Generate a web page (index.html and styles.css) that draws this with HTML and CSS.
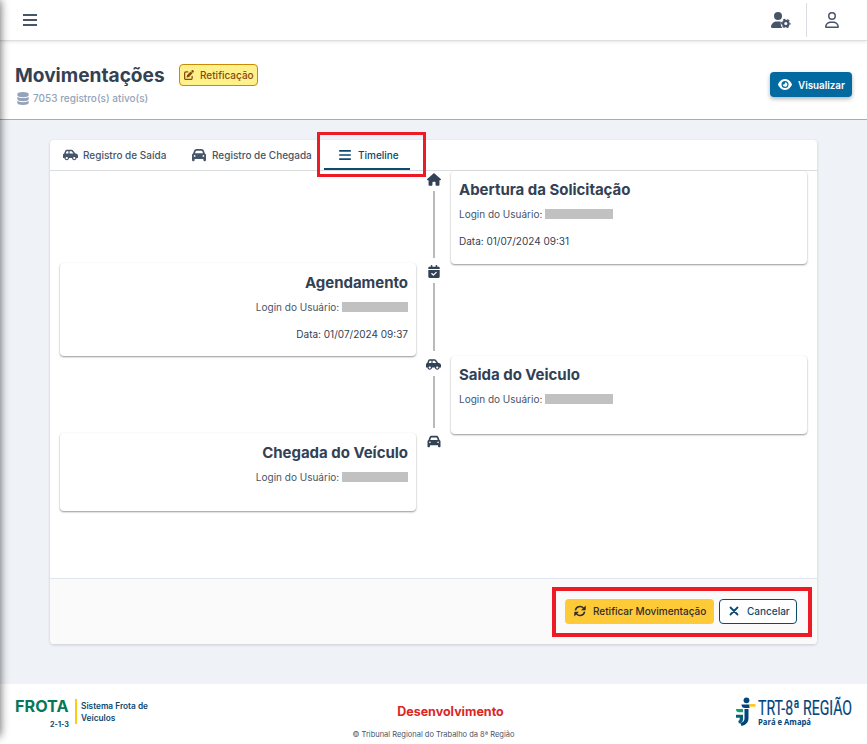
FILE: index.html
```html
<!DOCTYPE html>
<html lang="pt-BR">
<head>
<meta charset="utf-8">
<title>Movimentações</title>
<link rel="stylesheet" href="styles.css">
</head>
<body>
<svg width="0" height="0" class="defs">
  <symbol id="i-bars" viewBox="0 0 14 12"><path d="M0 1h14M0 6h14M0 11h14" stroke="currentColor" stroke-width="2"/></symbol>
  <symbol id="i-side" viewBox="0 0 640 512"><path d="M544 192h-16L419.22 56.02A64.025 64.025 0 0 0 369.24 32H155.33c-26.17 0-49.7 15.93-59.42 40.23L48 194.26C20.44 201.4 0 226.21 0 256v112c0 8.84 7.16 16 16 16h48c0 53.02 42.98 96 96 96s96-42.98 96-96h128c0 53.02 42.98 96 96 96s96-42.98 96-96h48c8.84 0 16-7.16 16-16v-80c0-53.02-42.98-96-96-96zM160 432c-26.47 0-48-21.53-48-48s21.53-48 48-48 48 21.53 48 48-21.53 48-48 48zm72-240H116.93l38.4-96H232v96zm48 0V96h89.24l76.8 96H280zm200 240c-26.47 0-48-21.53-48-48s21.53-48 48-48 48 21.53 48 48-21.53 48-48 48z"/></symbol>
  <symbol id="i-car" viewBox="0 0 512 512"><path d="M135.2 117.4L109.1 192H402.9l-26.1-74.6C372.3 104.6 360.2 96 346.6 96H165.4c-13.6 0-25.7 8.6-30.2 21.4zM39.6 196.8L74.8 96.3C88.3 57.8 124.6 32 165.4 32H346.6c40.8 0 77.1 25.8 90.6 64.3l35.2 100.5c23.2 9.6 39.6 32.5 39.6 59.2V448c0 17.7-14.3 32-32 32H448c-17.7 0-32-14.3-32-32V400H96v48c0 17.7-14.3 32-32 32H32c-17.7 0-32-14.3-32-32V256c0-26.7 16.4-49.6 39.6-59.2zM128 288a32 32 0 1 0 -64 0 32 32 0 1 0 64 0zm288 32a32 32 0 1 0 0-64 32 32 0 1 0 0 64z"/></symbol>
</svg>

<div class="sidebar-edge"></div>

<header class="topbar">
  <svg class="menu"><use href="#i-bars"/></svg>
  <div class="top-actions">
    <svg class="user-gear" viewBox="0 0 640 512"><circle cx="224" cy="128" r="128"/><path d="M178.3 304C79.8 304 0 383.8 0 482.3 0 498.7 13.3 512 29.7 512H370C325 470 300 395 315 316 302 309 290 304 269.7 304z"/><circle cx="474" cy="368" r="86" fill="none" stroke="currentColor" stroke-width="72"/><circle cx="474" cy="368" r="134" fill="none" stroke="currentColor" stroke-width="36" stroke-dasharray="74 66.320" stroke-dashoffset="37"/></svg>
    <span class="divider"></span>
    <svg class="user" viewBox="0 0 448 512"><path d="M304 128a80 80 0 1 0 -160 0 80 80 0 1 0 160 0zM96 128a128 128 0 1 1 256 0A128 128 0 1 1 96 128zM49.3 464H398.7c-8.9-63.3-63.3-112-129-112H178.3c-65.7 0-120.1 48.7-129 112zM0 482.3C0 383.8 79.8 304 178.3 304h91.4C368.2 304 448 383.8 448 482.3c0 16.4-13.3 29.7-29.7 29.7H29.7C13.3 512 0 498.7 0 482.3z"/></svg>
  </div>
</header>

<section class="heading">
  <div class="heading-text">
    <div class="title-row">
      <h1>Movimentações</h1>
      <span class="badge"><svg viewBox="0 0 512 512"><path d="M471.6 21.7c-21.9-21.9-57.3-21.9-79.2 0L362.3 51.7l97.9 97.9 30.1-30.1c21.9-21.9 21.9-57.3 0-79.2L471.6 21.7zm-299.2 220c-6.1 6.1-10.8 13.6-13.5 21.9l-29.6 88.8c-2.9 8.6-.6 18.1 5.8 24.6s15.9 8.7 24.6 5.8l88.8-29.6c8.2-2.7 15.7-7.4 21.9-13.5L437.7 172.3 339.7 74.3 172.4 241.7zM96 64C43 64 0 107 0 160V416c0 53 43 96 96 96H352c53 0 96-43 96-96V320c0-17.7-14.3-32-32-32s-32 14.3-32 32v96c0 17.7-14.3 32-32 32H96c-17.7 0-32-14.3-32-32V160c0-17.7 14.3-32 32-32h96c17.7 0 32-14.3 32-32s-14.3-32-32-32H96z"/></svg>Retificação</span>
    </div>
    <p class="count"><svg viewBox="0 0 448 512"><path d="M448 80v48c0 44.2-100.3 80-224 80S0 172.2 0 128V80C0 35.8 100.3 0 224 0S448 35.8 448 80zM393.2 214.7c20.8-7.4 39.9-16.9 54.8-28.6V288c0 44.2-100.3 80-224 80S0 332.2 0 288V186.1c14.9 11.8 34 21.2 54.8 28.6C99.7 230.7 159.5 240 224 240s124.3-9.3 169.2-25.3zM0 346.1c14.9 11.8 34 21.2 54.8 28.6C99.7 390.7 159.5 400 224 400s124.3-9.3 169.2-25.3c20.8-7.4 39.9-16.9 54.8-28.6V432c0 44.2-100.3 80-224 80S0 476.2 0 432V346.1z"/></svg>7053 registro(s) ativo(s)</p>
  </div>
  <button class="btn view"><svg viewBox="0 0 576 512"><path d="M288 32c-80.8 0-145.5 36.8-192.6 80.6C48.6 156 17.3 208 2.5 243.7c-3.3 7.9-3.3 16.7 0 24.6C17.3 304 48.6 356 95.4 399.4C142.5 443.2 207.2 480 288 480s145.5-36.8 192.6-80.6c46.8-43.5 78.1-95.4 93-131.1c3.3-7.9 3.3-16.7 0-24.6c-14.9-35.7-46.2-87.7-93-131.1C433.5 68.8 368.8 32 288 32zM144 256a144 144 0 1 1 288 0 144 144 0 1 1 -288 0zm144-64c0 35.3-28.7 64-64 64c-7.1 0-13.9-1.2-20.3-3.3c-5.5-1.8-11.9 1.6-11.7 7.4c.3 6.9 1.3 13.8 3.2 20.7c13.7 51.2 66.4 81.6 117.6 67.9s81.6-66.4 67.9-117.6c-11.1-41.5-47.8-69.4-88.6-71.1c-5.8-.2-9.2 6.1-7.4 11.7c2.1 6.4 3.3 13.2 3.3 20.3z"/></svg>Visualizar</button>
</section>

<main class="card">
  <nav class="tabs">
    <a class="tab tab-out"><svg class="side"><use href="#i-side"/></svg>Registro de Saída</a>
    <a class="tab tab-in"><svg class="front"><use href="#i-car"/></svg>Registro de Chegada</a>
    <a class="tab active"><svg class="lines"><use href="#i-bars"/></svg>Timeline<i class="mark mark-tab"></i></a>
  </nav>
  <div class="timeline">
    <div class="step tall right">
      <div class="rail"><svg class="home" viewBox="0 0 576 512"><path d="M575.8 255.5c0 18-15 32.1-32 32.1h-32l.7 160.2c0 2.7-.2 5.4-.5 8.1V472c0 22.1-17.9 40-40 40H392c-22.1 0-40-17.9-40-40V384c0-17.7-14.3-32-32-32H256c-17.7 0-32 14.3-32 32v88c0 22.1-17.9 40-40 40H104c-22.1 0-40-17.9-40-40V287.6H32c-18 0-32-14-32-32.1c0-9 3-17 10-24L266.4 8c7-7 15-8 22-8s15 2 21 7L564.8 231.5c8 7 12 15 11 24z"/></svg><span class="line"></span></div>
      <article><h2>Abertura da Solicitação</h2><p>Login do Usuário: <span class="redact"></span></p><p class="date">Data: 01/07/2024 09:31</p></article>
    </div>
    <div class="step tall left">
      <div class="rail"><svg class="cal" viewBox="0 0 448 512"><path d="M128 0c17.7 0 32 14.3 32 32V64H288V32c0-17.7 14.3-32 32-32s32 14.3 32 32V64h48c26.5 0 48 21.5 48 48v48H0V112C0 85.5 21.5 64 48 64H96V32c0-17.7 14.3-32 32-32zM0 192H448V464c0 26.5-21.5 48-48 48H48c-26.5 0-48-21.5-48-48V192zM329 305c9.4-9.4 9.4-24.6 0-33.9s-24.6-9.4-33.9 0l-95 95-47-47c-9.4-9.4-24.6-9.4-33.9 0s-9.4 24.6 0 33.9l64 64c9.4 9.4 24.6 9.4 33.9 0L329 305z"/></svg><span class="line"></span></div>
      <article><h2>Agendamento</h2><p>Login do Usuário: <span class="redact narrow"></span></p><p class="date">Data: 01/07/2024 09:37</p></article>
    </div>
    <div class="step right">
      <div class="rail"><svg class="side"><use href="#i-side"/></svg><span class="line"></span></div>
      <article><h2>Saida do Veiculo</h2><p>Login do Usuário: <span class="redact"></span></p></article>
    </div>
    <div class="step left">
      <div class="rail"><svg class="front"><use href="#i-car"/></svg></div>
      <article><h2>Chegada do Veículo</h2><p>Login do Usuário: <span class="redact narrow"></span></p></article>
    </div>
  </div>
  <div class="card-actions">
    <button class="btn warn"><svg viewBox="0 0 512 512"><path d="M60 225C85 60 290 10 405 125M452 287C427 452 222 502 107 387" fill="none" stroke="currentColor" stroke-width="66"/><path d="M500 25v175q0 22-22 22H300zM12 487V312q0-22 22-22h178z"/></svg>Retificar Movimentação</button>
    <button class="btn outline"><svg viewBox="0 0 10 10"><path d="M1.5 1.500l7 7M8.500 1.500l-7 7" stroke="currentColor" stroke-width="1.800" stroke-linecap="round"/></svg>Cancelar</button>
    <i class="mark mark-actions"></i>
  </div>
</main>

<footer class="footer">
  <div class="brand">
    <div class="brand-name"><strong>FROTA</strong><small>2-1-3</small></div>
    <p>Sistema Frota de<br>Veículos</p>
  </div>
  <div class="env"><strong>Desenvolvimento</strong><small>© Tribunal Regional do Trabalho da 8ª Região</small></div>
  <svg class="trt" viewBox="0 0 118 32">
    <circle cx="11.500" cy="4.300" r="2.900" fill="#00457c"/>
    <path d="M6.500 8.500H14.500v3.500H10q-3.500 0-3.500-3.500z" fill="#00457c"/>
    <path d="M9.500 13h4v9.500q0 6-7 7.500l-1.200-3q4.200-1 4.200-4.500z" fill="#00457c"/>
    <path d="M1 18.700h7v4.500q0 3.500-4 4.300l-.8-2.500q1.600-.5 1.600-2.500v-.8H1z" fill="#0b5d7a"/>
    <path d="M1 13h7v3.300H4q-3 0-3-3.300z" fill="#14a06e"/>
    <path d="M14.500 8h6v2.800h-6z" fill="#fdc82f"/>
    <text class="trt-name" x="23" y="19" textLength="94" lengthAdjust="spacingAndGlyphs">TRT-8ª REGIÃO</text>
    <text class="trt-sub" x="23" y="29" textLength="53" lengthAdjust="spacingAndGlyphs">Pará e Amapá</text>
  </svg>
</footer>
</body>
</html>
```
FILE: styles.css
```css
* { box-sizing: border-box; }
body {
  margin: 0;
  height: 744px;
  overflow: hidden;
  display: flex;
  flex-direction: column;
  background: #eff3f8;
  color: #334155;
  font-family: Inter, sans-serif;
  font-size: 10px;
}
h1, h2, p { margin: 0; }
svg { fill: currentColor; flex: none; display: block; }
.defs { position: absolute; }
.sidebar-edge {
  position: absolute;
  z-index: 5;
  left: -20px;
  top: 0;
  width: 20px;
  height: 736px;
  box-shadow: 0 0 10px rgba(0, 0, 0, .65);
}
.topbar {
  height: 41px;
  flex: none;
  display: flex;
  align-items: center;
  justify-content: space-between;
  padding: 0 28px 0 23px;
  background: #fff;
  border-bottom: 1px solid #dcdddf;
  box-shadow: 0 1px 3px rgba(0, 0, 0, .1);
  position: relative;
  z-index: 1;
  color: #475569;
}
.menu { width: 14px; height: 12px; }
.top-actions { display: flex; align-items: center; }
.user-gear { width: 20px; height: 16px; overflow: visible; }
.divider { width: 1px; height: 34px; margin: 0 18px 0 15px; background: #d9dce0; }
.user { width: 14px; height: 16px; }

.heading {
  height: 79px;
  flex: none;
  display: flex;
  justify-content: space-between;
  padding: 22px 15px 0;
  background: #fff;
  border-bottom: 1px solid #a9abae;
}
.title-row { display: flex; align-items: center; height: 24px; gap: 15px; }
h1 { font-size: 19.100px; line-height: 24px; font-weight: 700; width: 149px; margin-top: -1px; white-space: nowrap; }
.badge {
  display: flex;
  align-items: center;
  gap: 6px;
  width: 79px;
  height: 22px;
  padding: 0 0 0 4px;
  border: 1px solid #ca8a04;
  border-radius: 4px;
  background: #fef08a;
  color: #854d0e;
  font-weight: 500;
  white-space: nowrap;
}
.badge svg { width: 10px; height: 10px; }
.count { display: flex; align-items: center; gap: 4px; margin: 4px 0 0 2px; height: 14px; color: #94a3b8; font-weight: 500; }
.count svg { width: 12px; height: 13px; }

.btn {
  display: flex;
  align-items: center;
  height: 25px;
  border: 0;
  border-radius: 4px;
  font: 500 10px Inter, sans-serif;
  white-space: nowrap;
}
.view {
  width: 82px;
  margin-top: 9px;
  padding: 1px 0 0 8px;
  gap: 6px;
  background: #0369a1;
  color: #fff;
  font-weight: 600;
  font-size: 9.800px;
  box-shadow: 0 2px 4px rgba(0, 0, 0, .3);
}
.view svg { width: 14px; height: 13px; margin-top: -1px; }

.card {
  width: 767px;
  height: 504px;
  flex: none;
  margin: 20px 0 0 50px;
  display: flex;
  flex-direction: column;
  background: #fff;
  border-radius: 4px;
  box-shadow: 0 1px 3px rgba(0, 0, 0, .17);
}
.tabs { display: flex; height: 31px; flex: none; border-bottom: 1px solid #dadcdf; padding-left: 13px; }
.tab { display: flex; align-items: center; color: #475569; font-weight: 500; position: relative; white-space: nowrap; }
.tab-out { width: 129px; gap: 5px; }
.tab-in { width: 132px; gap: 6px; }
.side { width: 15px; height: 12px; }
.front { width: 14px; height: 14px; }
.active { width: 86px; padding-left: 15px; gap: 7px; color: #0c4a6e; border-bottom: 2px solid #0c4a6e; padding-top: 2px; }
.lines { width: 12px; height: 10px; }
.mark { position: absolute; z-index: 3; border: 3px solid #ed1c24; pointer-events: none; }
.mark-tab { left: -7px; top: -8px; width: 109px; height: 45px; }

.timeline { flex: 1; padding: 0 10px; }
.step { display: grid; grid-template-columns: 356px 35px 356px; height: 77.400px; }
.step.tall { height: 92.400px; }
.rail { grid-column: 2; grid-row: 1; display: flex; flex-direction: column; align-items: center; padding-top: 2px; color: #334155; }
.rail svg { height: 13px; margin-bottom: 5px; }
.rail .home { width: 14px; }
.rail .cal { width: 12px; }
.line { width: 2px; flex: 1; margin-bottom: 5px; background: #bababa; }
article { grid-row: 1; height: calc(100% + .5px); padding: 8px 8px 0; border-radius: 4px; background: #fff; box-shadow: 0 1px 2px rgba(0, 0, 0, .42); }
.right article { grid-column: 3; }
.left article { grid-column: 1; padding-top: 9px; text-align: right; }
h2 { font-size: 15px; line-height: 22px; font-weight: 700; letter-spacing: -.02px; }
article p { height: 14px; line-height: 14px; margin-top: 6px; color: #475569; white-space: nowrap; }
article .date { margin-top: 13px; color: #334155; }
.redact { display: inline-block; width: 68px; height: 10px; background: #c1c1c1; vertical-align: -1px; }
.redact.narrow { width: 66px; }

.card-actions {
  height: 66px;
  flex: none;
  position: relative;
  display: flex;
  align-items: center;
  justify-content: flex-end;
  gap: 5px;
  padding-right: 20px;
  border-top: 1px solid #dfe6ee;
  border-radius: 0 0 4px 4px;
  background: #fafafa;
}
.warn { width: 149px; padding: 0 0 1px 9px; gap: 7px; background: #ffca38; color: #2d2d2d; }
.warn svg { width: 12px; height: 12px; }
.outline { width: 78px; padding: 0 0 1px 9px; gap: 8px; border: 1px solid #0c4a6e; background: #fff; color: #0c4a6e; }
.outline svg { width: 10px; height: 10px; }
.mark-actions { left: 502px; top: 8px; width: 260px; height: 50px; border-width: 4px; }

.footer {
  flex: none;
  height: 60px;
  margin-top: 40px;
  padding: 0 14px 0 15px;
  display: grid;
  grid-template-columns: 1fr auto 1fr;
  background: #fff;
}
.brand { display: flex; height: 25px; margin-top: 15px; color: #0c4a6e; }
.brand-name { width: 62px; border-right: 2px solid #facc15; }
.brand-name strong { display: block; margin-top: -1px; color: #047857; font-size: 16.200px; line-height: 16px; font-weight: 700; }
.brand-name small { display: block; margin: 7px 6px 0 0; text-align: right; font-size: 7.200px; line-height: 8px; font-weight: 700; }
.brand p { margin: 1px 0 0 4px; font-size: 8.300px; line-height: 12px; font-weight: 600; white-space: nowrap; }
.env { text-align: center; padding-top: 20px; }
.env strong { display: block; margin-left: 33px; color: #dc2626; font-size: 12.500px; line-height: 16px; font-weight: 700; }
.env small { display: block; margin: 9px 1px 0 0; font-size: 7.500px; line-height: 11px; color: #475569; }
.trt { width: 118px; height: 32px; justify-self: end; margin-top: 12px; overflow: visible; }
.trt-name { font: 400 21px Roboto, sans-serif; fill: #00457c; stroke: #00457c; stroke-width: .2px; }
.trt-sub { font: 700 8px "Open Sans", sans-serif; fill: #00457c; }
```
